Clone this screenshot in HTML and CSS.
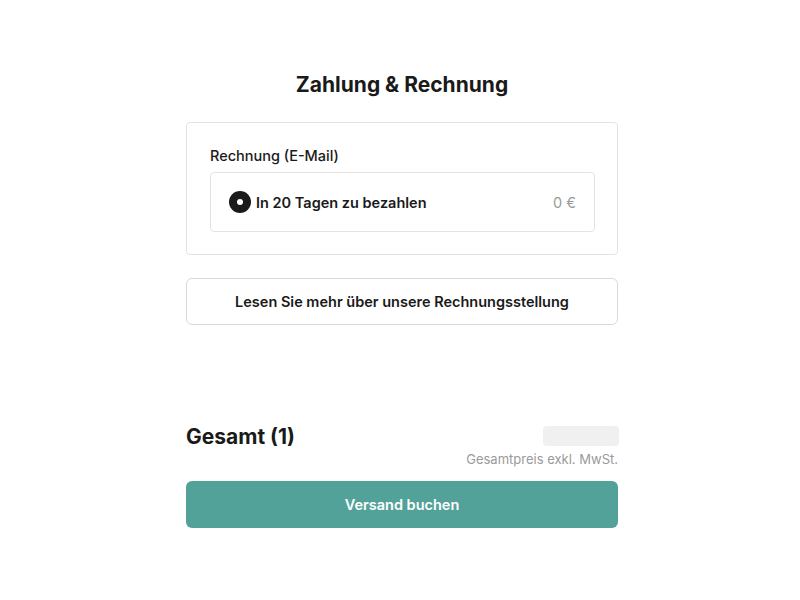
FILE: index.html
```html
<!DOCTYPE html>
<html lang="de">
<head>
<meta charset="utf-8">
<title>Zahlung &amp; Rechnung</title>
<link rel="stylesheet" href="styles.css">
</head>
<body>
<main class="page">
  <h1 class="title">Zahlung &amp; Rechnung</h1>
  <section class="card">
    <div class="card-label">Rechnung (E-Mail)</div>
    <label class="option">
      <span class="radio"></span>
      <span class="option-text">In 20 Tagen zu bezahlen</span>
      <span class="option-price">0 €</span>
    </label>
  </section>
  <button class="btn-outline">Lesen Sie mehr über unsere Rechnungsstellung</button>
  <section class="total">
    <div class="total-row">
      <h2 class="total-title">Gesamt (1)</h2>
      <span class="price-placeholder"></span>
    </div>
    <div class="total-note">Gesamtpreis exkl. MwSt.</div>
  </section>
  <button class="btn-primary">Versand buchen</button>
</main>
</body>
</html>
```
FILE: styles.css
```css
* { box-sizing: border-box; }
body {
  margin: 0;
  padding-left: 4px;
  background: #ffffff;
  font-family: Inter, "Liberation Sans", sans-serif;
  color: #1a1a1a;
}
.page {
  width: 432px;
  margin: 0 auto;
  padding-top: 70px;
  display: flex;
  flex-direction: column;
}
.title {
  margin: 0;
  text-align: center;
  font-size: 21px;
  font-weight: 650;
  line-height: 30px;
}
.card {
  margin-top: 22px;
  border: 1px solid #e3e3e3;
  border-radius: 4px;
  padding: 24px 22px 22px 23px;
}
.card-label {
  font-size: 14.5px;
  font-weight: 500;
  line-height: 18px;
  margin-bottom: 7px;
}
.option {
  display: flex;
  align-items: center;
  height: 60px;
  border: 1px solid #e3e3e3;
  border-radius: 4px;
  padding: 0 18px 0 18px;
}
.radio {
  width: 22px;
  height: 22px;
  border-radius: 50%;
  background: #1a1a1a;
  position: relative;
  flex: none;
}
.radio::after {
  content: "";
  position: absolute;
  left: 8px;
  top: 8px;
  width: 6px;
  height: 6px;
  border-radius: 50%;
  background: #fff;
}
.option-text {
  margin-left: 5px;
  font-size: 14.5px;
  font-weight: 600;
}
.option-price {
  margin-left: auto;
  font-size: 14.5px;
  color: #9a9a9a;
}
.btn-outline {
  margin-top: 23px;
  height: 47px;
  border: 1px solid #d9d9d9;
  border-radius: 6px;
  background: #fff;
  font-family: inherit;
  font-size: 14.5px;
  font-weight: 600;
  color: #1a1a1a;
}
.total {
  margin-top: 98px;
}
.total-row {
  display: flex;
  align-items: center;
  justify-content: space-between;
  height: 26px;
}
.total-title {
  margin: 0;
  font-size: 21px;
  font-weight: 700;
}
.price-placeholder {
  width: 76px;
  height: 20px;
  border-radius: 4px;
  background: #f0f0f0;
  margin-right: -1px;
}
.total-note {
  margin-top: 2px;
  text-align: right;
  font-size: 13px;
  color: #9a9a9a;
  line-height: 16px;
}
.btn-primary {
  margin-top: 14px;
  height: 47px;
  border: none;
  border-radius: 6px;
  background: #53a29a;
  color: #fff;
  font-family: inherit;
  font-size: 14.5px;
  font-weight: 600;
}
```
